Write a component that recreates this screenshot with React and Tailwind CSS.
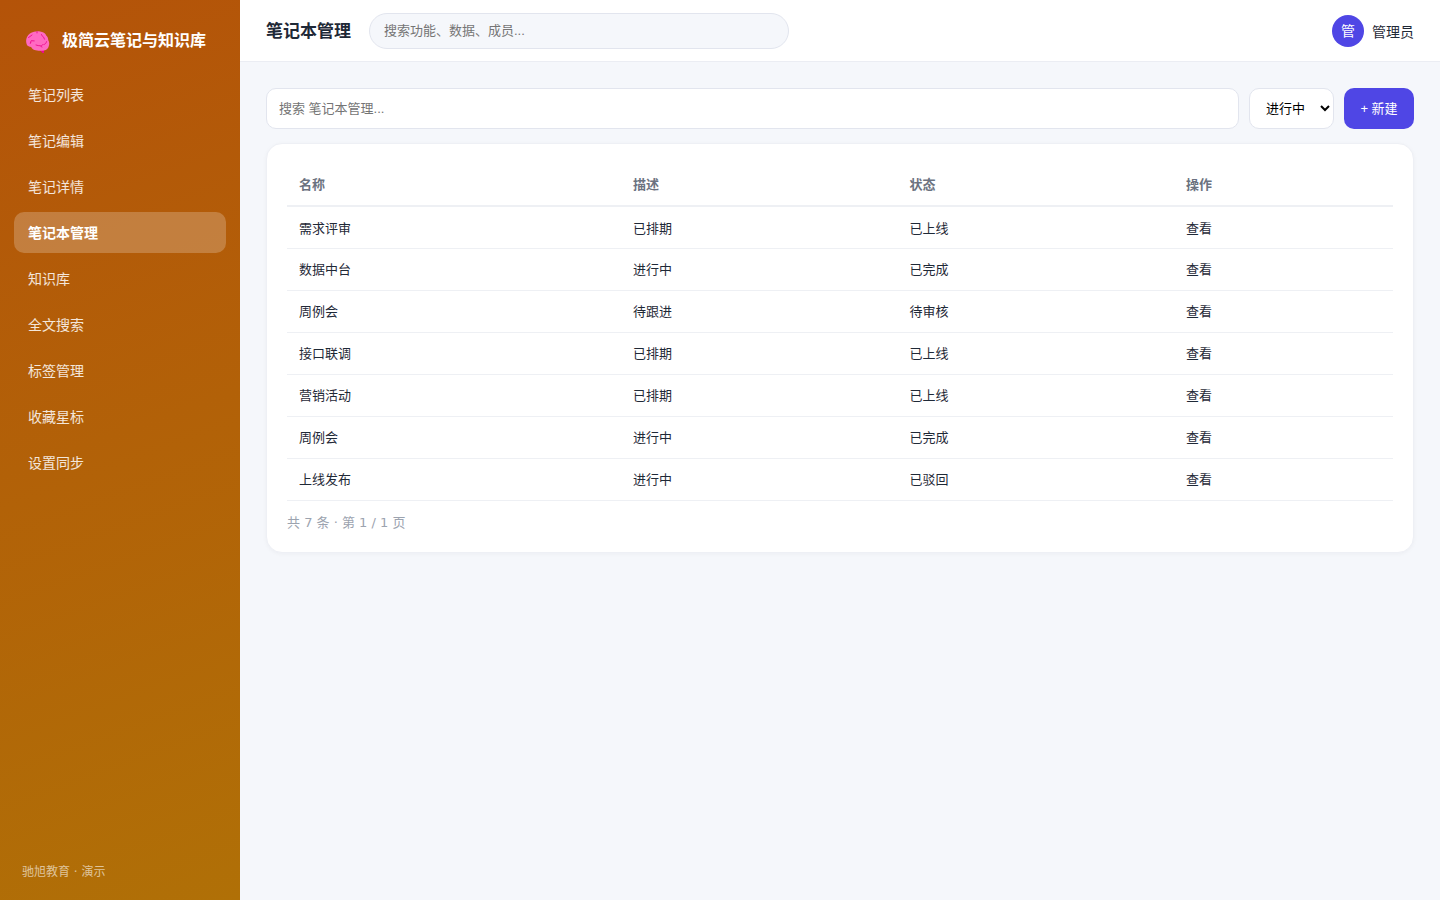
import { useState } from 'react'

const navItems = [
  '笔记列表',
  '笔记编辑',
  '笔记详情',
  '笔记本管理',
  '知识库',
  '全文搜索',
  '标签管理',
  '收藏星标',
  '设置同步',
]

const columns = [
  { label: '名称', width: 'w-[30.2%]' },
  { label: '描述', width: 'w-[25%]' },
  { label: '状态', width: 'w-[25%]' },
  { label: '操作', width: 'w-[19.8%]' },
]

const rows = [
  { name: '需求评审', desc: '已排期', status: '已上线' },
  { name: '数据中台', desc: '进行中', status: '已完成' },
  { name: '周例会', desc: '待跟进', status: '待审核' },
  { name: '接口联调', desc: '已排期', status: '已上线' },
  { name: '营销活动', desc: '已排期', status: '已上线' },
  { name: '周例会', desc: '进行中', status: '已完成' },
  { name: '上线发布', desc: '进行中', status: '已驳回' },
]

function BrainIcon() {
  return (
    <svg viewBox="0 0 24 24" className="w-6 h-6 shrink-0" aria-hidden="true">
      <path d="M13.500 20.500h4.500v3.500h-1.500z" fill="#ec0a8c" />
      <path
        d="M8 2.800C10 2 14 2 16 3c2 .4 3.700 1.800 4.200 3.500 1.400 1.200 2 2.800 2 4.500 1.200 1.800 1.300 4.200.6 6-.3 2.300-2.300 4-4.800 4.500-3 .4-7 .4-9.500-.5-1.700-.6-2.800-1.600-3.300-3C3.200 17.800 1.700 17.200 1 16-.2 13.500-.2 10.500 1 8 2.500 5 5 3.500 8 2.800z"
        fill="#ff6ac2"
      />
      <g fill="none" stroke="#ec0a8c" strokeWidth="0.9" strokeLinecap="round" strokeLinejoin="round">
        <path d="M2.500 8.500l1.500-1 2-1.500M4.500 13.500l.7-1.800 3 .2M11 2.700v1.200M4.800 13.500l-.5 1" />
        <path d="M15.500 5.500l1 1.800M17.500 8l1 2.200" />
        <path d="M10 16c1.500.4 3 .9 4.500.8 1.200 0 2-.6 2.500-1.300M18 15.500c1.200-.3 2.200-1.200 2.500-2.800M15 17.500l1 .5" />
      </g>
    </svg>
  )
}

function Sidebar({ active, onSelect }) {
  return (
    <aside className="w-60 shrink-0 flex flex-col px-3.5 pt-[25px] pb-4 bg-[linear-gradient(160deg,#b45309,#b07007)] text-white">
      <div className="flex items-center gap-3 h-8 px-3 mb-[17px]">
        <BrainIcon />
        <span className="text-base font-bold whitespace-nowrap">极简云笔记与知识库</span>
      </div>
      <nav className="flex flex-col gap-[5px]">
        {navItems.map(item => (
          <a
            key={item}
            href="#"
            onClick={() => onSelect(item)}
            className={
              item === active
                ? 'block h-[41px] leading-[43px] px-3.5 rounded-[10px] text-sm font-bold bg-white/22'
                : 'block h-[41px] leading-[43px] px-3.5 rounded-[10px] text-sm text-white/85'
            }
          >
            {item}
          </a>
        ))}
      </nav>
      <p className="mt-auto px-2 text-xs leading-6 text-white/60">驰旭教育 · 演示</p>
    </aside>
  )
}

function Header({ title }) {
  return (
    <header className="h-[62px] shrink-0 flex items-center px-[26px] bg-white border-b border-[#ebedf3]">
      <h1 className="pt-0.5 text-[17px] font-bold whitespace-nowrap">{title}</h1>
      <input
        type="search"
        aria-label="全局搜索"
        placeholder="搜索功能、数据、成员..."
        className="ml-[18px] w-[420px] h-9 px-3.5 rounded-full border border-[#e2e5ee] bg-[#f5f7fb] text-[13px] font-['Liberation_Sans','Noto_Sans_CJK_SC',sans-serif] placeholder:text-[#757575] outline-none"
      />
      <div className="ml-auto flex items-center gap-2">
        <span className="w-8 h-8 rounded-full bg-[#4f46e5] text-white text-sm flex items-center justify-center">管</span>
        <span className="pt-0.5 text-sm">管理员</span>
      </div>
    </header>
  )
}

export default function App() {
  const [active, setActive] = useState('笔记本管理')
  const [status, setStatus] = useState('进行中')

  return (
    <div className="min-h-screen flex bg-[#f5f7fb] text-[#1f2937] font-['DejaVu_Sans','Noto_Sans_CJK_SC',sans-serif]">
      <Sidebar active={active} onSelect={setActive} />
      <div className="flex-1 min-w-0 flex flex-col">
        <Header title={active} />
        <main className="px-[26px] py-[26px]">
          {/* filters */}
          <div className="flex gap-2.5 mb-3.5 font-['Liberation_Sans','Noto_Sans_CJK_SC',sans-serif]">
            <input
              type="text"
              aria-label="搜索笔记本"
              placeholder={`搜索 ${active}...`}
              className="flex-1 min-w-0 h-[41px] px-3 rounded-[10px] border border-[#e2e5ee] bg-white text-[13px] placeholder:text-[#757575] outline-none"
            />
            <select
              aria-label="状态"
              value={status}
              onChange={e => setStatus(e.target.value)}
              className="w-[85px] h-[41px] pl-3 rounded-[10px] border border-[#e2e5ee] bg-white text-[13px] text-black"
            >
              <option>进行中</option>
              <option>已完成</option>
            </select>
            <button className="w-[70px] h-[41px] rounded-[10px] bg-[#4f46e5] text-white text-[13px] whitespace-nowrap">
              + 新建
            </button>
          </div>

          <section className="p-5 rounded-2xl border border-[#eef0f5] bg-white shadow-[0_1px_4px_rgba(15,23,42,0.04)]">
            <table className="w-full table-fixed text-[13px] text-left">
              <thead>
                <tr className="h-[42px] border-b-2 border-[#eef0f4] text-[#6b7280]">
                  {columns.map(col => (
                    <th key={col.label} className={`${col.width} px-3 font-bold`}>{col.label}</th>
                  ))}
                </tr>
              </thead>
              <tbody>
                {rows.map((row, i) => (
                  <tr key={i} className="h-[42px] border-b border-[#eef0f4]">
                    <td className="px-3 pt-0.5">{row.name}</td>
                    <td className="px-3 pt-0.5">{row.desc}</td>
                    <td className="px-3 pt-0.5">{row.status}</td>
                    <td className="px-3 pt-0.5">查看</td>
                  </tr>
                ))}
              </tbody>
            </table>
            <p className="mt-3 text-[13px] leading-[19px] text-[#9ca3af]">共 7 条 · 第 1 / 1 页</p>
          </section>
        </main>
      </div>
    </div>
  )
}
